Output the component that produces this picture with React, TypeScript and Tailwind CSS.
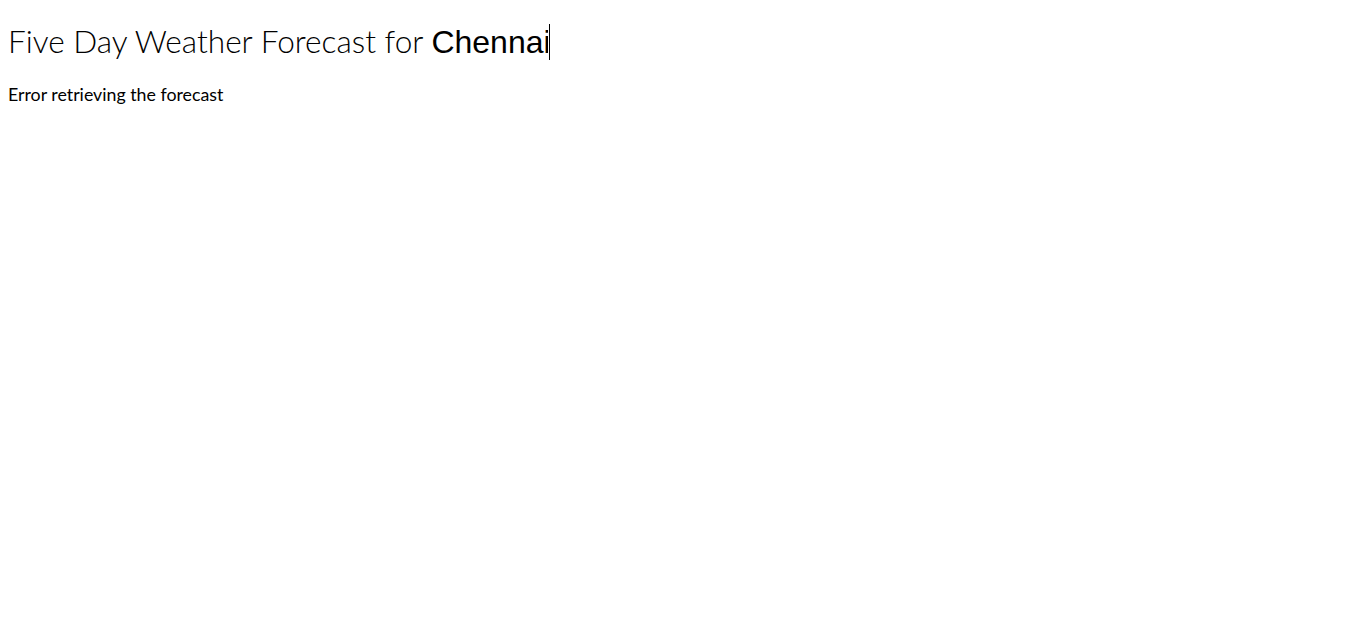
import React from "react";

export default function App() {
  return (
    <div className="min-h-[655px] bg-white px-2 pt-[22px] text-black" style={{ fontFamily: "Lato, 'Noto Sans', sans-serif" }}>
      <h1 className="flex items-baseline text-[31.6px] font-light leading-[38px]">
        <span>Five Day Weather Forecast for&nbsp;</span>
        <span className="flex items-center">
          <input
            defaultValue="Chennai"
            className="w-[117px] border-0 bg-transparent p-0 text-[32px] text-black caret-transparent outline-none"
            style={{ fontFamily: "'Liberation Sans', Arial, sans-serif", fontWeight: 400 }}
          />
          <span className="ml-px inline-block h-[36px] w-px bg-black" />
        </span>
      </h1>
      <p className="mt-[22px] text-[17.8px] font-normal leading-[22px]">Error retrieving the forecast</p>
    </div>
  );
}
